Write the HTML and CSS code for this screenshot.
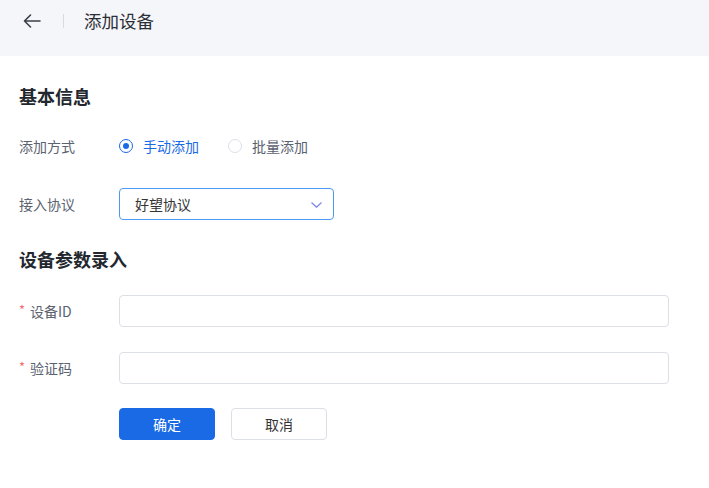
FILE: index.html
```html
<!DOCTYPE html>
<html lang="zh-CN">
<head>
<meta charset="utf-8">
<title>添加设备</title>
<link rel="stylesheet" href="styles.css">
</head>
<body>
<div class="header">
  <svg class="back" width="18" height="14" viewBox="0 0 18 14" fill="none" stroke="#3a3f4a" stroke-width="1.6" stroke-linecap="round" stroke-linejoin="round">
    <path d="M17 7H1.5M7.5 1L1.5 7l6 6"/>
  </svg>
  <span class="divider"></span>
  <span class="title">添加设备</span>
</div>
<div class="content">
  <h2 class="section first">基本信息</h2>
  <div class="row radio-row">
    <label class="label">添加方式</label>
    <div class="radios">
      <span class="radio checked"><span class="dot"></span><span class="rtext">手动添加</span></span>
      <span class="radio"><span class="dot"></span><span class="rtext">批量添加</span></span>
    </div>
  </div>
  <div class="row select-row">
    <label class="label">接入协议</label>
    <div class="select">
      <span>好望协议</span>
      <svg class="chev" width="11" height="6" viewBox="0 0 11 6" fill="none" stroke="#7a86e8" stroke-width="1.2" stroke-linecap="round" stroke-linejoin="round"><path d="M0.8 0.8L5.5 5.2L10.2 0.8"/></svg>
    </div>
  </div>
  <h2 class="section second">设备参数录入</h2>
  <div class="row input-row">
    <label class="label"><span class="req">*</span>设备ID</label>
    <div class="input"></div>
  </div>
  <div class="row input-row two">
    <label class="label"><span class="req">*</span>验证码</label>
    <div class="input"></div>
  </div>
  <div class="row buttons">
    <span class="label"></span>
    <button class="btn primary">确定</button>
    <button class="btn">取消</button>
  </div>
</div>
</body>
</html>
```
FILE: styles.css
```css
* { box-sizing: border-box; }
html, body { margin: 0; padding: 0; background: #fff; }
body {
  font-family: "Noto Sans CJK SC", "Noto Sans", "Liberation Sans", sans-serif;
  color: #333;
  width: 709px;
  height: 488px;
  overflow: hidden;
}
.header {
  height: 56px;
  background: #f5f6fa;
  display: flex;
  align-items: center;
  padding: 0 0 14px 22px;
}
.back { display: block; margin-left: 1px; }
.divider {
  width: 1px;
  height: 14px;
  background: #d9dbe0;
  margin-left: 22px;
}
.title {
  margin-left: 20px;
  font-size: 17.5px;
  line-height: 24px;
  color: #2b2f36;
}
.content { padding-left: 19px; }
.section {
  margin: 0;
  font-size: 18px;
  line-height: 24px;
  font-weight: 700;
  color: #23272e;
}
.section.first { margin-top: 28px; }
.section.second { margin-top: 27px; }
.row {
  display: flex;
  align-items: center;
  height: 32px;
}
.label {
  width: 100px;
  flex: none;
  font-size: 14px;
  color: #5b6270;
  display: flex;
  align-items: center;
}
.req {
  color: #f56c6c;
  font-size: 13px;
  width: 11px;
  margin-top: -3px;
}
.radio-row { margin-top: 22px; }
.radios { display: flex; align-items: center; }
.radio {
  display: flex;
  align-items: center;
  font-size: 14px;
  color: #5b6270;
  margin-right: 29px;
}
.radio .dot {
  width: 14px;
  height: 14px;
  border-radius: 50%;
  border: 1px solid #dcdfe6;
  background: #fff;
  margin-right: 10px;
  position: relative;
}
.radio.checked .dot { border-color: #1a6ae6; }
.radio.checked .dot::after {
  content: "";
  position: absolute;
  left: 3px; top: 3px;
  width: 6px; height: 6px;
  border-radius: 50%;
  background: #1a6ae6;
}
.radio.checked .rtext { color: #1a6ae6; }
.select-row { margin-top: 26px; }
.select {
  width: 215px;
  height: 32px;
  border: 1px solid #4a9af5;
  border-radius: 4px;
  display: flex;
  align-items: center;
  justify-content: space-between;
  padding: 0 11px 0 15px;
  font-size: 14px;
  color: #333;
}
.chev { display: block; margin-top: 1px; }
.input-row { margin-top: 24px; }
.input-row.two { margin-top: 25px; }
.input {
  width: 550px;
  height: 32px;
  border: 1px solid #dcdfe6;
  border-radius: 4px;
}
.buttons { margin-top: 24px; }
.btn {
  width: 96px;
  height: 32px;
  border-radius: 4px;
  border: 1px solid #dcdfe6;
  background: #fff;
  font-family: inherit;
  font-size: 14px;
  color: #333;
  padding: 0;
  margin: 0 16px 0 0;
}
.btn.primary {
  background: #1a6ae6;
  border-color: #1a6ae6;
  color: #fff;
}
```
